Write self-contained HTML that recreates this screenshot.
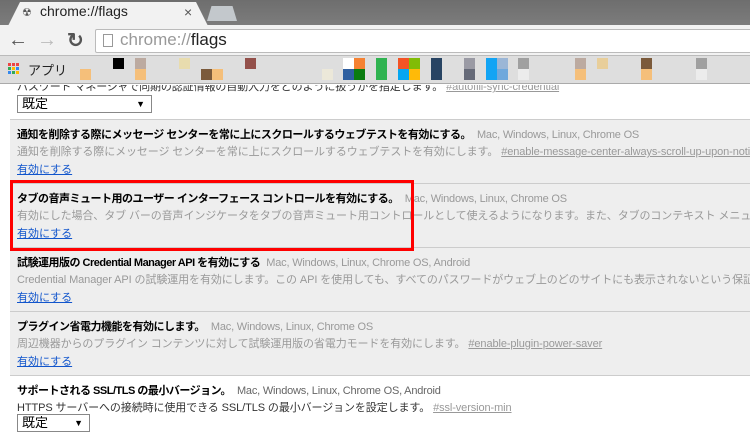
<!DOCTYPE html>
<html><head><meta charset="utf-8"><style>
*{margin:0;padding:0;box-sizing:border-box}
html,body{width:750px;height:436px;overflow:hidden}
body{position:relative;background:#fff;font-family:"Liberation Sans","Noto Sans CJK JP",sans-serif;font-size:11px;color:#000}
#w{position:absolute;left:0;top:0;width:750px;height:436px;overflow:hidden}
.a{position:absolute}
.sq{position:absolute;width:11px;height:11px}
.t{position:absolute;left:17px;white-space:nowrap;font-size:11px;font-weight:bold;letter-spacing:-0.5px}
.t span{font-weight:normal;color:#999;margin-left:6px;letter-spacing:-0.2px}
.d{position:absolute;left:17px;white-space:nowrap;color:#999;font-size:11px;letter-spacing:-0.1px}
.d u{color:#999}
.l{position:absolute;left:17px;color:#15c;text-decoration:underline;font-size:11px}
.p{position:absolute;left:10px;right:0;background:#eee;border-top:1px solid #ccc}
.sel{position:absolute;left:17px;border:1px solid #888;background:#fff;height:18px;font-size:13px;padding-left:4px;line-height:16px}
.sel:after{content:"▼";position:absolute;right:6px;top:0;font-size:9px}
.dot{position:absolute;width:3px;height:3px}
</style></head><body><div id="w">
<div class="a" style="left:0;top:0;width:750px;height:25px;background:linear-gradient(#6e6e6e,#7c7c7c)"></div>
<div class="a" style="left:8px;top:2px;width:200px;height:24px;background:#f2f2f2;clip-path:polygon(6% 0,94% 0,100% 100%,0 100%);"></div>
<div class="a" style="left:207px;top:6px;width:30px;height:15px;background:#c3c8cc;clip-path:polygon(15% 0,85% 0,100% 100%,0 100%)"></div>
<div class="a" style="left:22px;top:6px;font-size:11px;color:#555">☢</div>
<div class="a" style="left:40px;top:3px;font-size:14px;color:#222">chrome://flags</div>
<div class="a" style="left:184px;top:4px;font-size:14px;color:#555">×</div>
<div class="a" style="left:0;top:25px;width:750px;height:30px;background:#f2f2f2"></div>
<div class="a" style="left:8px;top:29px;font-size:20px;color:#555;font-weight:bold">←</div>
<div class="a" style="left:37px;top:29px;font-size:20px;color:#bbb;font-weight:bold">→</div>
<div class="a" style="left:67px;top:28px;font-size:20px;color:#555;font-weight:bold">↻</div>
<div class="a" style="left:95px;top:29px;width:660px;height:24px;background:#fff;border:1px solid #bbb;border-radius:2px"></div>
<div class="a" style="left:103px;top:34px;width:10px;height:13px;border:1px solid #999;background:#fff"></div>
<div class="a" style="left:120px;top:30px;font-size:17px;color:#999">chrome://<span style="color:#222">flags</span></div>
<div class="a" style="left:0;top:55px;width:750px;height:29px;background:#dedede;border-top:1px solid #bbb;border-bottom:1px solid #aaa"></div>
<div class="dot" style="left:8px;top:63px;background:#e44"></div><div class="dot" style="left:12px;top:63px;background:#e44"></div><div class="dot" style="left:16px;top:63px;background:#e44"></div>
<div class="dot" style="left:8px;top:67px;background:#3a5"></div><div class="dot" style="left:12px;top:67px;background:#fb0"></div><div class="dot" style="left:16px;top:67px;background:#38e"></div>
<div class="dot" style="left:8px;top:71px;background:#38e"></div><div class="dot" style="left:12px;top:71px;background:#3a5"></div><div class="dot" style="left:16px;top:71px;background:#fb0"></div>
<div class="a" style="left:28px;top:60px;font-size:13px;color:#222">アプリ</div>
<div class="sq" style="left:113px;top:58px;background:#000"></div>
<div class="sq" style="left:135px;top:58px;background:#bcaaa0"></div>
<div class="sq" style="left:179px;top:58px;background:#e8dcae"></div>
<div class="sq" style="left:245px;top:58px;background:#93504a"></div>
<div class="sq" style="left:343px;top:58px;background:#fff"></div>
<div class="sq" style="left:354px;top:58px;background:#f58232"></div>
<div class="sq" style="left:376px;top:58px;height:22px;background:#2fb350"></div>
<div class="sq" style="left:398px;top:58px;background:#f35325"></div>
<div class="sq" style="left:409px;top:58px;background:#81bc06"></div>
<div class="sq" style="left:431px;top:58px;height:22px;background:#284463"></div>
<div class="sq" style="left:464px;top:58px;background:#9a9aa4"></div>
<div class="sq" style="left:486px;top:58px;background:#12a4f4"></div>
<div class="sq" style="left:497px;top:58px;background:#9bb6d6"></div>
<div class="sq" style="left:518px;top:58px;background:#a0a0a0"></div>
<div class="sq" style="left:575px;top:58px;background:#bcaaa0"></div>
<div class="sq" style="left:597px;top:58px;background:#e8ce9a"></div>
<div class="sq" style="left:641px;top:58px;background:#7b5a3b"></div>
<div class="sq" style="left:696px;top:58px;background:#a0a0a0"></div>
<div class="sq" style="left:80px;top:69px;background:#f5bf7a"></div>
<div class="sq" style="left:135px;top:69px;background:#f5bf7a"></div>
<div class="sq" style="left:201px;top:69px;background:#7b5a3b"></div>
<div class="sq" style="left:212px;top:69px;background:#f5bf7a"></div>
<div class="sq" style="left:322px;top:69px;background:#ece8d9"></div>
<div class="sq" style="left:343px;top:69px;background:#2f5fa0"></div>
<div class="sq" style="left:354px;top:69px;background:#0a7c10"></div>
<div class="sq" style="left:398px;top:69px;background:#05a6f0"></div>
<div class="sq" style="left:409px;top:69px;background:#ffba08"></div>
<div class="sq" style="left:464px;top:69px;background:#666a78"></div>
<div class="sq" style="left:486px;top:69px;background:#12a4f4"></div>
<div class="sq" style="left:497px;top:69px;background:#6fa8dc"></div>
<div class="sq" style="left:518px;top:69px;background:#ececec"></div>
<div class="sq" style="left:575px;top:69px;background:#f5bf7a"></div>
<div class="sq" style="left:641px;top:69px;background:#f5bf7a"></div>
<div class="sq" style="left:696px;top:69px;background:#ececec"></div>

<div class="d" style="top:78px;color:#333;clip-path:inset(7px 0 0 0)">パスワード マネージャで同期の認証情報の自動入力をどのように扱うかを指定します。 <u>#autofill-sync-credential</u></div>
<div class="sel" style="top:95px;width:135px">既定</div>

<div class="p" style="top:119px;height:64px"></div>
<div class="t" style="top:126px">通知を削除する際にメッセージ センターを常に上にスクロールするウェブテストを有効にする。<span>Mac, Windows, Linux, Chrome OS</span></div>
<div class="d" style="top:143px">通知を削除する際にメッセージ センターを常に上にスクロールするウェブテストを有効にします。 <u>#enable-message-center-always-scroll-up-upon-notification-removal</u></div>
<div class="l" style="top:161px">有効にする</div>

<div class="p" style="top:183px;height:64px"></div>
<div class="t" style="top:190px">タブの音声ミュート用のユーザー インターフェース コントロールを有効にする。<span>Mac, Windows, Linux, Chrome OS</span></div>
<div class="d" style="top:207px">有効にした場合、タブ バーの音声インジケータをタブの音声ミュート用コントロールとして使えるようになります。また、タブのコンテキスト メニューに</div>
<div class="l" style="top:225px">有効にする</div>

<div class="p" style="top:247px;height:64px"></div>
<div class="t" style="top:254px">試験運用版の Credential Manager API を有効にする<span>Mac, Windows, Linux, Chrome OS, Android</span></div>
<div class="d" style="top:271px">Credential Manager API の試験運用を有効にします。この API を使用しても、すべてのパスワードがウェブ上のどのサイトにも表示されないという保証はあ</div>
<div class="l" style="top:289px">有効にする</div>

<div class="p" style="top:311px;height:64px"></div>
<div class="t" style="top:318px">プラグイン省電力機能を有効にします。<span>Mac, Windows, Linux, Chrome OS</span></div>
<div class="d" style="top:335px">周辺機器からのプラグイン コンテンツに対して試験運用版の省電力モードを有効にします。 <u>#enable-plugin-power-saver</u></div>
<div class="l" style="top:353px">有効にする</div>

<div class="a" style="left:10px;right:0;top:375px;border-top:1px solid #ccc"></div>
<div class="t" style="top:382px">サポートされる SSL/TLS の最小バージョン。<span style="color:#666">Mac, Windows, Linux, Chrome OS, Android</span></div>
<div class="d" style="top:399px;color:#333">HTTPS サーバーへの接続時に使用できる SSL/TLS の最小バージョンを設定します。 <u style="color:#999">#ssl-version-min</u></div>
<div class="sel" style="top:414px;width:73px">既定</div>

<div class="a" style="left:10px;top:180px;width:404px;height:71px;border:3px solid #f00"></div>
</div></body></html>
